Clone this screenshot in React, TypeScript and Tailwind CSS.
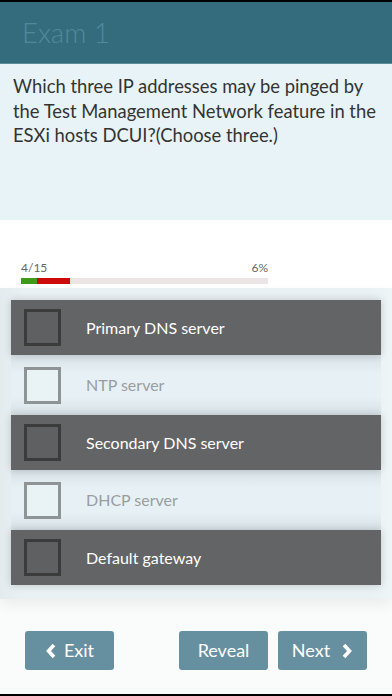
import React from 'react';

interface Option {
  label: string;
  dark: boolean;
}

const OPTIONS: Option[] = [
  { label: 'Primary DNS server', dark: true },
  { label: 'NTP server', dark: false },
  { label: 'Secondary DNS server', dark: true },
  { label: 'DHCP server', dark: false },
  { label: 'Default gateway', dark: true },
];

const ChevronLeft = () => (
  <svg width="12" height="16" viewBox="0 0 12 16" className="mr-[7px]">
    <path d="M9 2 L3.5 8 L9 14" fill="none" stroke="white" strokeWidth="3.6" strokeLinejoin="miter" />
  </svg>
);

const ChevronRight = () => (
  <svg width="12" height="16" viewBox="0 0 12 16" className="ml-[11px]">
    <path d="M3 2 L8.5 8 L3 14" fill="none" stroke="white" strokeWidth="3.6" strokeLinejoin="miter" />
  </svg>
);

const OptionRow = ({ option }: { option: Option }) => {
  if (option.dark) {
    return (
      <div className="h-[55px] mx-[11px] bg-[#636466] flex items-center shadow-[0_0_8px_rgba(0,0,0,0.18)] relative">
        <div className="w-[37px] h-[37px] ml-[13px] border-[3px] border-[#3b3b3c] bg-[#5f6062]" />
        <span className="ml-[25px] text-[16px] text-white">{option.label}</span>
      </div>
    );
  }
  return (
    <div className="h-[60px] mx-[11px] bg-[linear-gradient(180deg,#d8e2e6_0%,#e7f1f5_30%,#e7f1f5_70%,#d8e2e6_100%)] flex items-center">
      <div className="w-[37px] h-[37px] ml-[13px] border-[3px] border-[#8e9496] bg-[#e9f2f5]" />
      <span className="ml-[25px] text-[16px] text-[#9a9d9f]">{option.label}</span>
    </div>
  );
};

const App: React.FC = () => {
  return (
    <div className="w-[392px] h-[696px] flex flex-col bg-[#fafcfb] overflow-hidden" style={{ fontFamily: 'Lato, "Noto Sans", sans-serif' }}>
      <div className="h-[2px] bg-black" />
      <div className="h-[62px] bg-[#346c7e] border-b border-[#5c8c9a] flex items-center pl-[22px]">
        <span className="text-[27.5px] font-light text-[#52899a] leading-none">Exam 1</span>
      </div>
      <div className="h-[156px] bg-[#e8f3f8] px-[13px] pt-[10px]">
        <p className="text-[18.4px] leading-[24.5px] text-[#333333]">
          Which three IP addresses may be pinged by the Test Management Network feature in the ESXi hosts DCUI?(Choose three.)
        </p>
      </div>
      <div className="h-[68px] bg-white px-[21px] pt-[41px]">
        <div className="w-[247px]">
          <div className="flex justify-between text-[12px] leading-[14px] text-[#666666]">
            <span>4/15</span>
            <span>6%</span>
          </div>
          <div className="mt-[3px] h-[6px] bg-[#ebe5e6] flex">
            <div className="w-[16px] bg-[#3f9a1b]" />
            <div className="w-[33px] bg-[#cc0a0a]" />
          </div>
        </div>
      </div>
      <div className="bg-[linear-gradient(90deg,#e3ebee_0%,#e9f1f4_6%,#e9f1f4_94%,#eef5f7_100%)] pt-[12px] pb-[14px] shadow-[0_6px_12px_rgba(0,0,0,0.06)]">
        {OPTIONS.map((o) => (
          <OptionRow key={o.label} option={o} />
        ))}
      </div>
      <div className="flex-1 flex items-start pt-[32px] px-[25px]">
        <button className="w-[89px] h-[39px] rounded-[3px] bg-[#66909f] text-white text-[18px] flex items-center justify-center">
          <ChevronLeft />
          Exit
        </button>
        <div className="flex-1" />
        <button className="w-[89px] h-[39px] rounded-[3px] bg-[#66909f] text-white text-[18px] flex items-center justify-center">
          Reveal
        </button>
        <button className="ml-[10px] w-[89px] h-[39px] rounded-[3px] bg-[#66909f] text-white text-[18px] flex items-center justify-center">
          Next
          <ChevronRight />
        </button>
      </div>
      <div className="h-[2px] bg-black" />
    </div>
  );
};

export default App;
